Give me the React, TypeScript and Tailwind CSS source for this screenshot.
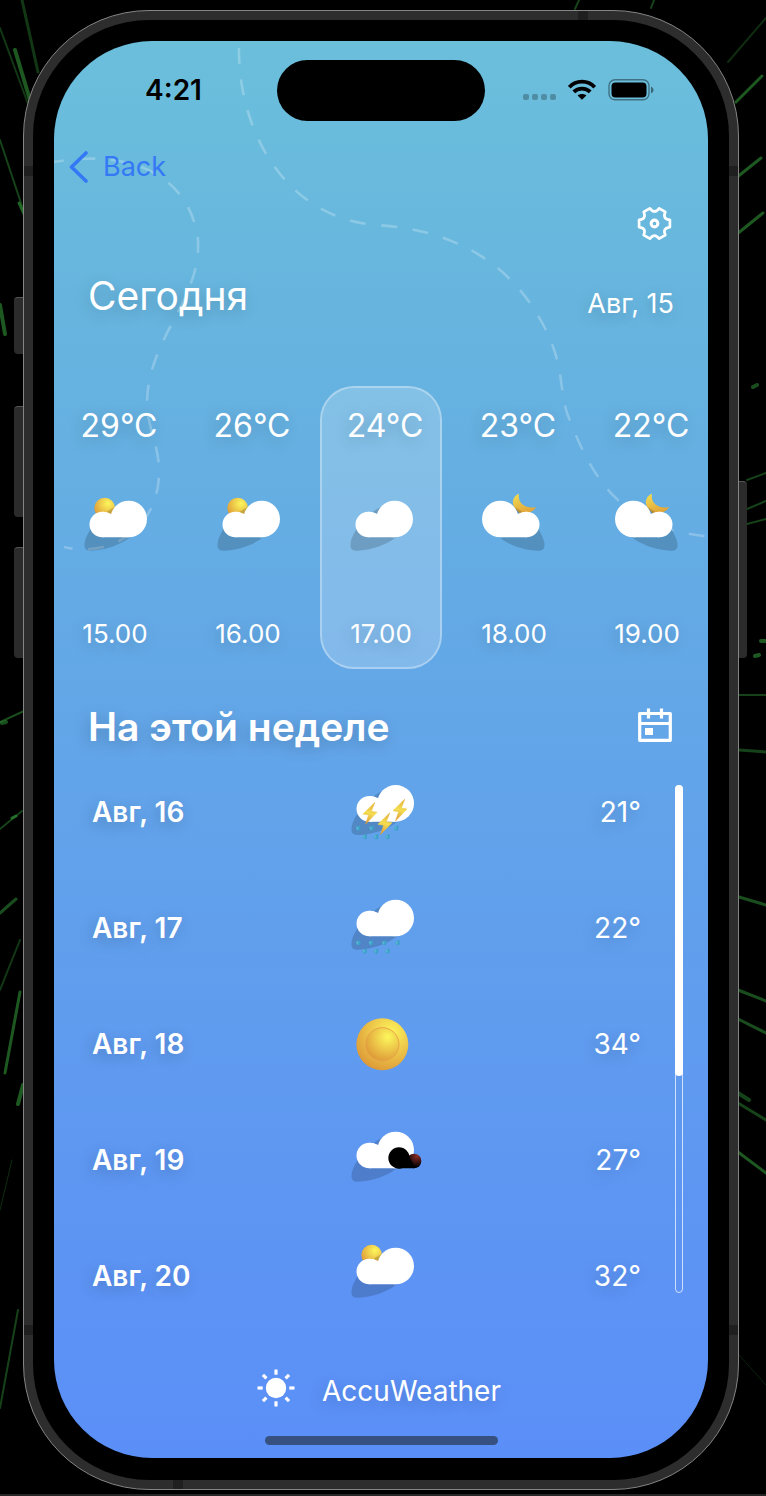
import React, { useState } from "react";

const textShadow = "[text-shadow:-2px_4px_16px_rgba(0,0,0,0.2)]";

type IconKind = "day" | "cloud" | "night" | "storm" | "rain" | "sun" | "error";

function Cloud() {
  return (
    <g fill="#fff">
      <circle cx="61" cy="91.5" r="38.5" />
      <circle cx="140" cy="75" r="55" />
      <path d="M61 53 Q76 53 86 59 L140 75 V130 H61 Z" />
    </g>
  );
}

function CloudShadow() {
  return (
    <path
      d="M24 170 C8 170 6 158 8 146 C14 110 60 55 100 38 C150 30 180 70 170 100 C150 140 80 171 24 170Z"
      fill="#000"
      opacity="0.16"
    />
  );
}

function Bolt({ x, y, id }: { x: number; y: number; id: string }) {
  return (
    <path
      transform={`translate(${x} ${y})`}
      d="M77 73 L42 107 L59 110 L50 137 L84 102 L67 99 Z"
      fill={`url(#${id}-bolt)`}
      stroke={`url(#${id}-bolt)`}
      strokeWidth="2"
      strokeLinejoin="round"
    />
  );
}

function Drops({ points }: { points: number[][] }) {
  return (
    <g>
      {points.map(([x, y]) => (
        <g key={`${x}-${y}`}>
          <path d={`M${x + 5} ${y - 9} Q${x + 9} ${y + 8} ${x} ${y + 8} Q${x - 8} ${y + 7} ${x - 7} ${y - 1} Z`} fill="#3f9fcb" />
          <path d={`M${x - 7} ${y - 5} l8 4 l-4 8 Z`} fill="#58b9cf" />
        </g>
      ))}
    </g>
  );
}

function WeatherIcon({ kind, id, label }: { kind: IconKind; id: string; label: string }) {
  return (
    <svg viewBox="0 0 198 180" className="h-[60px] w-[66px] shrink-0 overflow-visible" role="img" aria-label={label}>
      <defs>
        <radialGradient id={`${id}-sun`} cx="0.66" cy="0.28" r="0.8">
          <stop offset="0" stopColor="#fdf75c" />
          <stop offset="1" stopColor="#dc9536" />
        </radialGradient>
        <linearGradient id={`${id}-moon`} x1="0.2" y1="0" x2="0.6" y2="1">
          <stop offset="0" stopColor="#f3dc52" />
          <stop offset="1" stopColor="#dfa037" />
        </linearGradient>
        <linearGradient id={`${id}-bolt`} x1="0.6" y1="0" x2="0.4" y2="1">
          <stop offset="0" stopColor="#e6b03c" />
          <stop offset="0.5" stopColor="#f4dd50" />
          <stop offset="1" stopColor="#dd9836" />
        </linearGradient>
        <radialGradient id={`${id}-dark`} cx="0.7" cy="0.15" r="0.75">
          <stop offset="0" stopColor="#8e2d27" />
          <stop offset="1" stopColor="#000" />
        </radialGradient>
      </defs>
      {kind === "day" && (
        <>
          <circle cx="68" cy="42" r="31" fill={`url(#${id}-sun)`} />
          <CloudShadow />
          <Cloud />
        </>
      )}
      {kind === "cloud" && (
        <>
          <CloudShadow />
          <Cloud />
        </>
      )}
      {kind === "night" && (
        <>
          <path d="M114 -1 C97 5 88 28 104 45 L118 60 C140 58 158 54 165 39 C138 46 108 30 114 -1Z" fill={`url(#${id}-moon)`} />
          <g transform="translate(198 0) scale(-1 1)">
            <CloudShadow />
            <Cloud />
          </g>
        </>
      )}
      {kind === "storm" && (
        <g transform="translate(0 4)">
          <CloudShadow />
          <Drops points={[[28, 149], [68, 149], [142, 149], [48, 175], [82, 175], [116, 175]]} />
          <Cloud />
          <Bolt x={0} y={0} id={id} />
          <Bolt x={90} y={-10} id={id} />
          <Bolt x={45} y={31} id={id} />
        </g>
      )}
      {kind === "rain" && (
        <>
          <CloudShadow />
          <Drops points={[[28, 149], [66, 149], [106, 149], [146, 149], [48, 174], [82, 174], [116, 174]]} />
          <Cloud />
        </>
      )}
      {kind === "sun" && (
        <g transform="translate(100 106)">
          <circle r="78" fill={`url(#${id}-sun)`} />
          <circle r="50" fill={`url(#${id}-sun)`} stroke="#e9a44a" strokeWidth="3" />
        </g>
      )}
      {kind === "error" && (
        <>
          <CloudShadow />
          <Cloud />
          <circle cx="195" cy="108" r="22" fill={`url(#${id}-dark)`} />
          <circle cx="150" cy="99" r="32" />
          <path d="M150 90 L178 90 L196 124 V130 H150 Z" />
        </>
      )}
    </svg>
  );
}

function point(angle: number, radius: number) {
  const a = (angle * Math.PI) / 180;
  return `${(Math.cos(a) * radius).toFixed(2)} ${(Math.sin(a) * radius).toFixed(2)}`;
}

const gearPath =
  `M${point(-13, 47)} ` +
  [0, 60, 120, 180, 240, 300]
    .map((a) => `L${point(a + 13, 47)} C${point(a + 22, 33)} ${point(a + 38, 33)} ${point(a + 47, 47)}`)
    .join(" ") +
  " Z";

function Streaks({ lines }: { lines: number[][] }) {
  return (
    <g stroke="#2f8a35" strokeLinecap="round">
      {lines.map(([x1, y1, x2, y2, width, opacity], i) => (
        <line key={i} x1={x1} y1={y1} x2={x2} y2={y2} strokeWidth={width} opacity={opacity * 0.8} />
      ))}
    </g>
  );
}

const leftStreaks = [
  [22, 0, 38, 72, 3, 0.5], [15, 50, 30, 100, 4, 0.8], [0, 28, 34, 120, 2, 0.5], [0, 140, 24, 212, 2, 0.6],
  [19, 203, 24, 214, 3, 0.9], [0, 305, 5, 334, 4, 0.8], [0, 722, 24, 711, 2, 0.7], [2, 723, 6, 722, 4, 0.7],
  [0, 829, 22, 811, 2, 0.6], [12, 818, 16, 816, 3, 0.9], [0, 913, 16, 899, 3, 0.7], [0, 990, 20, 940, 2, 0.5],
  [5, 1073, 20, 992, 3, 0.8], [18, 1104, 23, 1085, 4, 0.8], [0, 1210, 12, 1160, 1, 0.4], [0, 1408, 18, 1310, 2, 0.6],
];

const rightStreaks = [
  [-82, 0, -85, 8, 2, 0.6], [-157, 0, -161, 9, 2, 0.6],
  [30, 18, -8, 62, 2, 0.4], [26, 76, 0, 102, 3, 0.8], [25, 158, 0, 178, 3, 0.8], [27, 213, 1, 234, 3, 0.8],
  [17, 387, 21, 385, 4, 0.7], [11, 480, 30, 473, 2, 0.6], [11, 509, 30, 501, 2, 0.6], [11, 524, 30, 519, 2, 0.6],
  [25, 641, 29, 641, 4, 0.8], [19, 656, 23, 655, 4, 0.8], [2, 695, 30, 695, 2, 0.6], [3, 750, 30, 752, 3, 0.6],
  [3, 897, 30, 905, 3, 0.7], [2, 990, 30, 1001, 3, 0.7], [2, 1019, 30, 1033, 3, 0.7], [2, 1093, 13, 1100, 4, 0.6],
  [2, 1103, 30, 1120, 3, 0.6], [2, 1152, 30, 1173, 3, 0.8], [3, 1355, 30, 1385, 1, 0.3],
];

const hours: { temp: string; icon: IconKind; time: string; label: string }[] = [
  { temp: "29°C", icon: "day", time: "15.00", label: "Переменная облачность" },
  { temp: "26°C", icon: "day", time: "16.00", label: "Переменная облачность" },
  { temp: "24°C", icon: "cloud", time: "17.00", label: "Облачно" },
  { temp: "23°C", icon: "night", time: "18.00", label: "Облачная ночь" },
  { temp: "22°C", icon: "night", time: "19.00", label: "Облачная ночь" },
];

const days: { date: string; icon: IconKind; temp: string; label: string }[] = [
  { date: "Авг, 16", icon: "storm", temp: "21°", label: "Гроза" },
  { date: "Авг, 17", icon: "rain", temp: "22°", label: "Дождь" },
  { date: "Авг, 18", icon: "sun", temp: "34°", label: "Солнечно" },
  { date: "Авг, 19", icon: "error", temp: "27°", label: "Пасмурно" },
  { date: "Авг, 20", icon: "day", temp: "32°", label: "Переменная облачность" },
];

function StatusBar() {
  return (
    <div className="grid grid-cols-[1fr_208px_1fr] items-center pt-[19px]">
      <time className="pb-0.5 pl-4 text-center text-[28px] font-semibold leading-8 text-black">4:21</time>
      <div className="h-[61px] rounded-full bg-black" />
      <div className="flex items-center pb-0.5 pl-[38px]">
        <svg viewBox="0 0 131 22" className="h-[22px] w-[131px]" aria-hidden="true">
          <g fill="#000" opacity="0.25">
            <rect x="0" y="15" width="6" height="6" rx="2" />
            <rect x="9" y="15" width="6" height="6" rx="2" />
            <rect x="18" y="15" width="6" height="6" rx="2" />
            <rect x="27" y="15" width="6" height="6" rx="2" />
          </g>
          <g fill="none" stroke="#000" strokeWidth="3.8">
            <path d="M46.3 8.2 C53 0.8 65 0.8 71.7 8.2" />
            <path d="M50.8 12.8 C55 8.5 63 8.5 67.2 12.8" />
          </g>
          <path d="M59 20.8 L54.6 16.4 C57 14.4 61 14.4 63.4 16.4 Z" />
          <rect x="86" y="0.8" width="40" height="20" rx="6" fill="none" stroke="#000" strokeWidth="1.4" opacity="0.4" />
          <rect x="88.5" y="3.4" width="35" height="15" rx="4" />
          <path d="M128 7.5 Q130.6 8.5 130.6 11 Q130.6 13.5 128 14.5 Z" opacity="0.45" />
        </svg>
      </div>
    </div>
  );
}

export default function App() {
  const [selected, setSelected] = useState(2);
  return (
    <div className="relative overflow-hidden border-b-2 border-[#262626] bg-black pb-1 pl-[23px] pr-[27px] pt-[10px] font-[Inter,'Noto_Sans',sans-serif]">
      <svg className="absolute left-0 top-0 h-full w-[30px] overflow-visible" aria-hidden="true">
        <Streaks lines={leftStreaks} />
      </svg>
      <svg className="absolute right-0 top-0 h-full w-[30px] overflow-visible" aria-hidden="true">
        <Streaks lines={rightStreaks} />
      </svg>

      <div className="relative rounded-[126px] border border-[#858585] bg-[#2d2d2d] p-[9px]">
        <div className="absolute -left-[10px] top-[286px] h-[57px] w-[9px] rounded-l-sm border-t border-[#555] bg-[#2b2b2b]" />
        <div className="absolute -left-[10px] top-[395px] h-[111px] w-[9px] rounded-l-sm border-t border-[#555] bg-[#2b2b2b]" />
        <div className="absolute -left-[10px] top-[536px] h-[111px] w-[9px] rounded-l-sm border-t border-[#555] bg-[#2b2b2b]" />
        <div className="absolute -right-[9px] top-[470px] h-[177px] w-[8px] rounded-r-sm border-t border-[#555] bg-[#2b2b2b]" />
        <div className="absolute left-0 top-[155px] h-[10px] w-[9px] bg-[#1f1f1f]" />
        <div className="absolute right-0 top-[155px] h-[10px] w-[9px] bg-[#1f1f1f]" />
        <div className="absolute bottom-[154px] left-0 h-[10px] w-[9px] bg-[#1f1f1f]" />
        <div className="absolute bottom-[154px] right-0 h-[10px] w-[9px] bg-[#1f1f1f]" />
        <div className="absolute right-[150px] top-0 h-[9px] w-[10px] bg-[#1f1f1f]" />
        <div className="absolute bottom-0 left-[149px] h-[9px] w-[10px] bg-[#1f1f1f]" />

        <div className="rounded-[116px] bg-black p-[21px] pb-[22px]">
          <main className="relative overflow-hidden rounded-[98px] bg-[linear-gradient(180deg,#6bbfdb_0%,#65b0e1_28%,#63a6e8_48%,#5d95f3_84%,#5b8ff8_100%)] pb-[13px] text-white">
            <svg className="pointer-events-none absolute left-0 top-0 h-[560px] w-[654px]" viewBox="54 41 654 560" aria-hidden="true">
              <g fill="none" stroke="#fff" strokeOpacity="0.24" strokeWidth="2.6" strokeDasharray="16 15.5">
                <path d="M239 48 C238 130 285 218 376 225 C450 229 500 260 530 303 C572 365 554 390 572 425 C600 500 640 530 712 537" />
                <path d="M48 163 C130 147 190 175 198 240 C201 300 150 335 147 400 C147 430 160 445 159 475 C157 530 110 558 64 547" />
              </g>
            </svg>

            <div className="relative">
              <StatusBar />

              <nav className="mt-[26px] flex h-10 items-center pl-[15px]">
                <a href="#back" className="flex items-center gap-[14px] text-[27px] leading-10 text-[#3478f6]">
                  <svg viewBox="0 0 20 32" className="h-8 w-5" fill="none" stroke="currentColor" strokeWidth="3.6" strokeLinecap="round" strokeLinejoin="round" aria-hidden="true">
                    <path d="M17 2 L2.5 16 L17 30" />
                  </svg>
                  Back
                </a>
              </nav>

              <div className="mt-4 flex h-10 items-center justify-end pr-9">
                <button type="button" aria-label="Настройки">
                  <svg viewBox="-52 -52 104 104" className="h-[35px] w-[35px]" fill="none" stroke="#fff" strokeWidth="8" strokeLinejoin="round" aria-hidden="true">
                    <path d={gearPath} />
                    <circle r="10" strokeWidth="9" />
                  </svg>
                </button>
              </div>

              <header className="mt-[27px] flex h-[52px] items-end justify-between pl-[34px] pr-[34px]">
                <h1 className={`text-[39px] leading-[52px] ${textShadow}`}>Сегодня</h1>
                <p className={`text-[27px] leading-9 ${textShadow}`}>Авг, 15</p>
              </header>

              <ul className="mt-16 grid grid-cols-5 gap-x-[11px]">
                {hours.map((hour, i) => (
                  <li key={hour.time}>
                    <button
                      type="button"
                      aria-pressed={selected === i}
                      onClick={() => setSelected(i)}
                      className={`flex w-full flex-col items-center rounded-[34px] border-2 pb-[17px] pt-[18px] ${
                        selected === i ? "border-white/45 bg-white/20 bg-clip-padding" : "border-transparent"
                      }`}
                    >
                      <span className={`pl-2 text-[32px] leading-10 ${textShadow}`}>{hour.temp}</span>
                      <span className="mt-12">
                        <WeatherIcon kind={hour.icon} id={`hour${i}`} label={hour.label} />
                      </span>
                      <span className={`mt-16 text-[26px] leading-8 ${textShadow}`}>{hour.time}</span>
                    </button>
                  </li>
                ))}
              </ul>

              <div className="mt-8 flex h-[52px] items-center justify-between pl-[34px] pr-9">
                <h2 className={`text-[39px] font-semibold leading-[52px] ${textShadow}`}>На этой неделе</h2>
                <button type="button" aria-label="Календарь" className="pb-1">
                  <svg viewBox="0 0 34 34" className="h-[34px] w-[34px]" fill="none" stroke="#fff" strokeWidth="3.2" strokeLinejoin="round" aria-hidden="true">
                    <path d="M1.7 5.5 H32.3 V32.3 H1.7 Z M1.7 15.5 H32.3" />
                    <path d="M10.5 0.5 V10.5 M23.5 0.5 V10.5" />
                    <rect x="7" y="20" width="8" height="7" fill="#fff" stroke="none" />
                  </svg>
                </button>
              </div>

              <div className="mt-px flex pl-[38px] pr-[25px]">
                <ul className="flex-1 pr-1">
                  {days.map((day, i) => (
                    <li key={day.date} className="grid h-[116px] grid-cols-[1fr_66px_1fr] items-center">
                      <span className={`text-[28px] font-semibold leading-8 ${textShadow}`}>{day.date}</span>
                      <span className="pb-[10px]">
                        <WeatherIcon kind={day.icon} id={`day${i}`} label={day.label} />
                      </span>
                      <span className={`pr-[30px] text-right text-[28px] leading-8 ${textShadow}`}>{day.temp}</span>
                    </li>
                  ))}
                </ul>
                <div className="mb-[41px] mt-[31px] w-2 rounded-full border border-white/70">
                  <div className="-mx-px -mt-px h-[291px] rounded-full bg-white" />
                </div>
              </div>

              <footer className="mt-9 flex h-10 items-center justify-center gap-[27px] pr-1">
                <svg viewBox="-19 -17 38 38" className="h-[38px] w-[38px] overflow-visible" aria-hidden="true">
                  <circle r="10.2" fill="#fff" />
                  <g stroke="#fff" strokeWidth="3.2">
                    {[0, 45, 90, 135, 180, 225, 270, 315].map((a) => (
                      <path key={a} d={a % 90 === 0 ? "M13.3 0 H18.5" : "M13.5 0 H18.5"} transform={`rotate(${a})`} />
                    ))}
                  </g>
                </svg>
                <a href="#accuweather" className={`pt-0.5 text-[28px] leading-10 ${textShadow}`}>AccuWeather</a>
              </footer>

              <div className="mx-auto mt-[26px] h-[9px] w-[233px] rounded-full bg-[#36507f]" />
            </div>
          </main>
        </div>
      </div>
    </div>
  );
}
